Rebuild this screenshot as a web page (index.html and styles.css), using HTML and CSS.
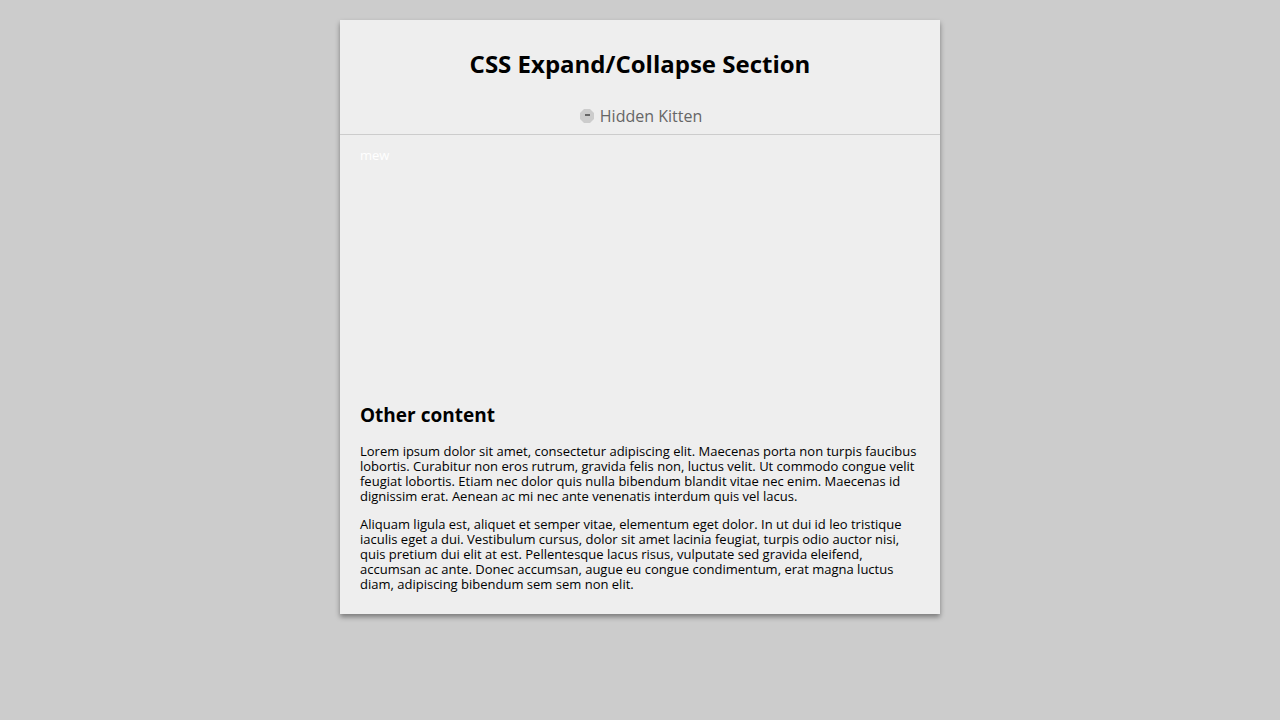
FILE: index.html
```html
<!DOCTYPE html>
<html lang="en">
  <head>
    <meta charset="utf-8">
    <title>CSS Expand/Collapse Section</title>
    <link rel="stylesheet" href="styles.css">
  </head>
  <body>
    <main class="container">
      <h1>CSS Expand/Collapse Section</h1>

      <details class="expand" open>
        <summary>
          <svg class="toggle-icon" viewBox="0 0 14 14" aria-hidden="true">
            <path class="disc" d="M4 0h6l4 4v6l-4 4H4l-4-4V4z"/>
            <path class="sign minus" d="M5 5h5v2H5z"/>
            <path class="sign plus" d="M6 4h2v2h2v2H8v2H6V8H4V6h2z"/>
          </svg>
          Hidden Kitten
        </summary>
        <div class="kitten">
          <p>mew</p>
        </div>
      </details>

      <section class="content">
        <h2>Other content</h2>
        <p>Lorem ipsum dolor sit amet, consectetur adipiscing elit. Maecenas porta non turpis faucibus lobortis. Curabitur non eros rutrum, gravida felis non, luctus velit. Ut commodo congue velit feugiat lobortis. Etiam nec dolor quis nulla bibendum blandit vitae nec enim. Maecenas id dignissim erat. Aenean ac mi nec ante venenatis interdum quis vel lacus.</p>
        <p>Aliquam ligula est, aliquet et semper vitae, elementum eget dolor. In ut dui id leo tristique iaculis eget a dui. Vestibulum cursus, dolor sit amet lacinia feugiat, turpis odio auctor nisi, quis pretium dui elit at est. Pellentesque lacus risus, vulputate sed gravida eleifend, accumsan ac ante. Donec accumsan, augue eu congue condimentum, erat magna luctus diam, adipiscing bibendum sem sem non elit.</p>
      </section>
    </main>
  </body>
</html>
```
FILE: styles.css
```css
* {
  box-sizing: border-box;
}

body {
  margin: 0;
  padding: 20px;
  background: #ccc;
  color: #000;
  font-family: "Open Sans", sans-serif;
  font-size: 13px;
  line-height: 15px;
}

.container {
  max-width: 600px;
  margin: 0 auto;
  background: #eee;
  box-shadow: 0 3px 5px rgba(0, 0, 0, .4);
}

h1 {
  margin: 0;
  padding: 30px 20px 20px;
  font-size: 24px;
  line-height: 28px;
  text-align: center;
}

h2 {
  margin: 0 0 18px;
  font-size: 19px;
  line-height: 22px;
}

p {
  margin: 0 0 13px;
}

summary {
  display: flex;
  align-items: center;
  justify-content: center;
  gap: 6px;
  padding: 8px 18px 8px 20px;
  border-bottom: 1px solid #ccc;
  color: #666;
  font-size: 16px;
  line-height: 20px;
  list-style: none;
  cursor: pointer;
}

summary::-webkit-details-marker {
  display: none;
}

summary:hover {
  color: #000;
}

.toggle-icon {
  width: 14px;
  height: 14px;
}

.disc {
  fill: #ccc;
}

.sign {
  fill: #666;
}

.plus,
.expand:not([open]) .minus {
  display: none;
}

.expand:not([open]) .plus {
  display: inline;
}

.kitten {
  min-height: 250px;
  padding: 13px 20px;
  color: #fff;
}

.content {
  padding: 19px 20px 9px;
}
```
